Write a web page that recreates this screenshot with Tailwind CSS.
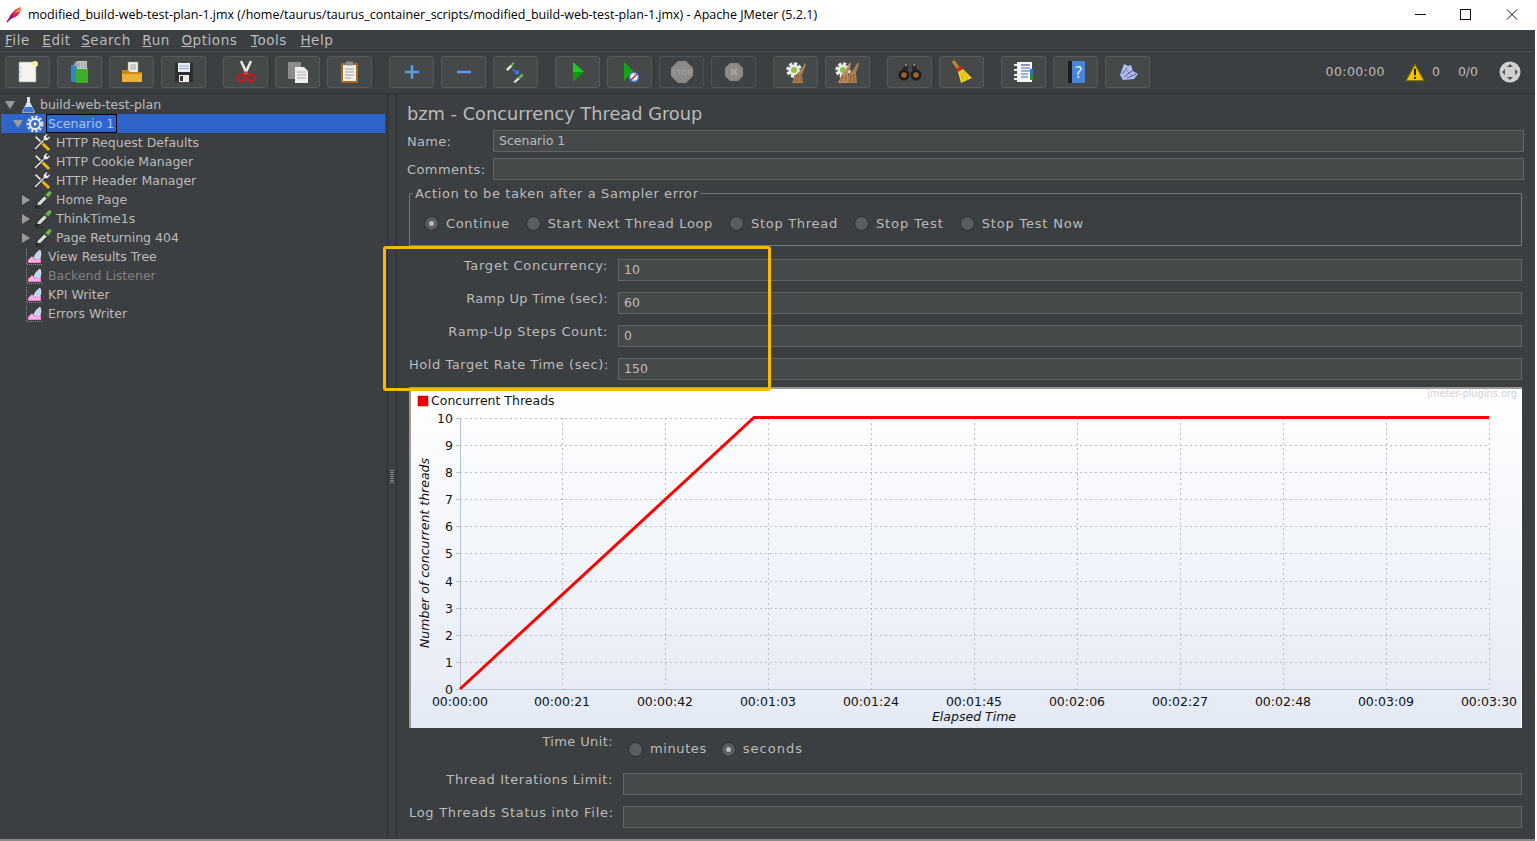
<!DOCTYPE html>
<html><head><meta charset="utf-8"><script src="https://cdn.jsdelivr.net/npm/@tailwindcss/browser@4"></script></head>
<body class="m-0 overflow-hidden bg-white">
<svg width="0" height="0" class="absolute">
<defs>
<linearGradient id="chartbg" x1="0" y1="0" x2="0" y2="1"><stop offset="0" stop-color="#ffffff"/><stop offset="1" stop-color="#e4eaf5"/></linearGradient>
<symbol id="wrench" viewBox="0 0 20 20"><path d="M3 3 L17 17" stroke="#e4e4e4" stroke-width="1.8"/><path d="M1 1 L4 4" stroke="#333" stroke-width="1.6"/><path d="M10.5 10.5 L18 18" stroke="#f2b705" stroke-width="3"/><path d="M2 18 L13 7" stroke="#1e1e1e" stroke-width="3"/><path d="M3 17 L13 7" stroke="#dcdcdc" stroke-width="1.6"/><path d="M12 8 L12 4 L15 1 L17 1 L15 4 L16 5 L19 3 L19 5 L16 8 Z" fill="#ececec" stroke="#222" stroke-width=".5"/></symbol>
<symbol id="pipette" viewBox="0 0 20 20"><path d="M1 19 H10" stroke="#2a2a2a" stroke-width="1.2"/><path d="M2 17 L4 13 L11 6 L14 9 L7 16 Z" fill="#d9dcd6" stroke="#1e1e1e" stroke-width="1"/><path d="M1.5 18.5 L4 16" stroke="#1e1e1e" stroke-width="1.4"/><path d="M12 5 L15.5 1.5 Q18.5 .5 18.5 3.5 L15 8 Z" fill="#6fb552"/><path d="M10.5 5 L15 9.5" stroke="#2d5c22" stroke-width="1.6"/></symbol>
<symbol id="listener" viewBox="0 0 18 16"><path d="M.5 0 V15.5 H17" fill="none" stroke="#8a8a8a" stroke-dasharray="1 1"/><path d="M2 14 V11 L6 7 L9 10 L15 9 V14 Z" fill="#f07fcf"/><path d="M3 13 V11 L6 8 L9 11 L14 10 V13 Z" fill="#f6b4e4"/><path d="M8 9 Q9 4 14 1 Q16 5 14 9 Q11 10 8 9 Z" fill="#bcd4f6" stroke="#f0f6ff" stroke-width=".7"/></symbol>
<symbol id="pipesmall" viewBox="0 0 24 24"><path d="M1 9 L6 4 L8 6 L3 11 Z" fill="#dfe3da"/><path d="M6 4 L9 1 Q11 1 10 3 L8 6 Z" fill="#6eb04e"/><path d="M8 9 L14 13" stroke="#2f80e0" stroke-width="1.6"/><path d="M15 9 L15 15 L10 14 Z" fill="#2f80e0"/><path d="M9 23 L14 18 L16 20 L11 24 Z" fill="#dfe3da"/><path d="M14 18 L18 14 Q20 14 20 16 L16 20 Z" fill="#6eb04e"/></symbol>
</defs>
</svg>

<div class="w-[1537px] h-[841px] flex flex-col font-['DejaVu_Sans',sans-serif] text-[12.5px] text-[#bbbbbb] bg-white">
  <!-- title bar -->
  <div class="h-[30px] shrink-0 flex items-center bg-white text-black font-['Open_Sans',sans-serif] text-[12.5px] relative">
    <svg class="ml-[6px] mr-[5px] shrink-0 mb-[2px]" width="17" height="17" viewBox="0 0 17 17"><path d="M2 15 C3 9 7 4 15 1 C15 6 12 11 5 13 Z" fill="#d8265c"/><path d="M8 7 C10 5 12 3 15 1 C15 3 14 5 13 6 Z" fill="#f59a23"/><path d="M1 16 L7 9" stroke="#6a1b8a" stroke-width="1.4"/></svg>
    <span class="whitespace-nowrap">modified_build-web-test-plan-1.jmx (/home/taurus/taurus_container_scripts/modified_build-web-test-plan-1.jmx) - Apache JMeter (5.2.1)</span>
    <div class="ml-auto flex items-center mr-[2px]">
      <svg class="w-[46px] h-[30px]" viewBox="0 0 46 30"><path d="M18 14.5 H29" stroke="#111"/></svg>
      <svg class="w-[46px] h-[30px]" viewBox="0 0 46 30"><rect x="17.5" y="9.5" width="10" height="10" fill="none" stroke="#111"/></svg>
      <svg class="w-[46px] h-[30px]" viewBox="0 0 46 30"><path d="M18 9.5 L28 19.5 M28 9.5 L18 19.5" stroke="#111"/></svg>
    </div>
  </div>
  <!-- app frame -->
  <div class="flex-1 flex flex-col bg-[#3c3f41] mr-[2px] border-b-[2px] border-[#8a8a8a] min-h-0">
    <!-- menu -->
    <div class="h-[20px] shrink-0 flex items-center pl-[5px] gap-[12.5px] text-[13.5px] leading-[20px] tracking-[.55px]">
      <span><u>F</u>ile</span><span><u>E</u>dit</span><span class="-ml-[2px]"><u>S</u>earch</span><span class="-ml-[1px]"><u>R</u>un</span><span class="-ml-[1px]"><u>O</u>ptions</span><span class="ml-[1px]"><u>T</u>ools</span><span class="ml-[1px]"><u>H</u>elp</span>
    </div>
    <!-- toolbar -->
    <div class="h-[44px] shrink-0 border-y border-[#2f3133] flex items-center pl-[5px] relative shadow-[inset_0_1px_0_#555]">
      <div class="flex gap-[7px]">
        <button class="w-[45px] h-[32px] rounded-[3px] border border-[#55595b] bg-[#45494a] flex items-center justify-center"><svg width="22" height="24" viewBox="0 0 22 24"><rect x="2" y="2" width="17" height="20" fill="#f4f4f0" stroke="#999" stroke-width=".6"/><circle cx="18" cy="4" r="3" fill="#f8f0a0"/><circle cx="4" cy="8" r=".7" fill="#999"/><circle cx="4" cy="12" r=".7" fill="#999"/><circle cx="4" cy="16" r=".7" fill="#999"/></svg></button>
        <button class="w-[45px] h-[32px] rounded-[3px] border border-[#55595b] bg-[#45494a] flex items-center justify-center"><svg width="22" height="24" viewBox="0 0 22 24"><rect x="2" y="5" width="7" height="17" rx="1" fill="#2f86c8"/><rect x="7" y="8" width="12" height="15" rx="1" fill="#3fae2a"/><rect x="8" y="1" width="10" height="8" fill="#c5c9cc"/><path d="M4 6 L7 1 L10 6 Z" fill="#9aa3a8"/><path d="M10 2V8M13 2V8M16 2V8" stroke="#8a9094"/></svg></button>
        <button class="w-[45px] h-[32px] rounded-[3px] border border-[#55595b] bg-[#45494a] flex items-center justify-center"><svg width="22" height="24" viewBox="0 0 22 24"><rect x="7" y="2" width="10" height="11" fill="#eee" stroke="#999" stroke-width=".5"/><path d="M9 5H15M9 7H15M9 9H15" stroke="#888" stroke-width=".7"/><path d="M1 10 H7 L9 12 H21 V22 H1 Z" fill="#c98a18"/><path d="M1 14 H21 V22 H1 Z" fill="#eab238"/></svg></button>
        <button class="w-[45px] h-[32px] rounded-[3px] border border-[#55595b] bg-[#45494a] flex items-center justify-center"><svg width="22" height="24" viewBox="0 0 22 24"><path d="M2 3 H20 V22 H2 Z" fill="#2e2e2e"/><rect x="5" y="3" width="12" height="9" fill="#e8eef4"/><path d="M6 6H16M6 8.5H16" stroke="#8fa8c8"/><rect x="6" y="15" width="10" height="7" fill="#eee"/><rect x="7" y="16" width="3" height="5" fill="#333"/></svg></button>
      </div>
      <div class="flex gap-[7px] ml-[17px]">
        <button class="w-[45px] h-[32px] rounded-[3px] border border-[#55595b] bg-[#45494a] flex items-center justify-center"><svg width="22" height="24" viewBox="0 0 22 24"><path d="M6 1 L12 14 M16 1 L10 14" stroke="#e8e8e8" stroke-width="2.6"/><circle cx="6" cy="18" r="3.6" fill="none" stroke="#d01818" stroke-width="2"/><circle cx="16" cy="18" r="3.6" fill="none" stroke="#d01818" stroke-width="2"/><path d="M8 15 L11 12 L14 15" fill="none" stroke="#d01818" stroke-width="1.5"/></svg></button>
        <button class="w-[45px] h-[32px] rounded-[3px] border border-[#55595b] bg-[#45494a] flex items-center justify-center"><svg width="22" height="24" viewBox="0 0 22 24"><rect x="1" y="2" width="13" height="17" fill="#8a8c8e"/><path d="M8 7 H17 L21 11 V23 H8 Z" fill="#eeeeee"/><path d="M10 12H19M10 15H19M10 18H19" stroke="#999" stroke-width=".8"/></svg></button>
        <button class="w-[45px] h-[32px] rounded-[3px] border border-[#55595b] bg-[#45494a] flex items-center justify-center"><svg width="22" height="24" viewBox="0 0 22 24"><rect x="2" y="3" width="17" height="20" rx="1" fill="#a86a18"/><rect x="4" y="5" width="13" height="16" fill="#f0f0f0"/><rect x="7" y="1.5" width="7" height="4" fill="#8a8c8e"/><path d="M6 9H15M6 12H15M6 15H15M6 18H12" stroke="#888" stroke-width=".8"/></svg></button>
      </div>
      <div class="flex gap-[7px] ml-[17px]">
        <button class="w-[45px] h-[32px] rounded-[3px] border border-[#55595b] bg-[#45494a] flex items-center justify-center"><svg width="18" height="18" viewBox="0 0 18 18"><path d="M9 2V16M2 9H16" stroke="#5a9ae6" stroke-width="2.6"/></svg></button>
        <button class="w-[45px] h-[32px] rounded-[3px] border border-[#55595b] bg-[#45494a] flex items-center justify-center"><svg width="18" height="18" viewBox="0 0 18 18"><path d="M2 9H16" stroke="#5a9ae6" stroke-width="2.6"/></svg></button>
        <button class="w-[45px] h-[32px] rounded-[3px] border border-[#55595b] bg-[#45494a] flex items-center justify-center"><svg width="22" height="22"><use href="#pipesmall"/></svg></button>
      </div>
      <div class="flex gap-[7px] ml-[17px]">
        <button class="w-[45px] h-[32px] rounded-[3px] border border-[#55595b] bg-[#45494a] flex items-center justify-center"><svg width="22" height="24" viewBox="0 0 22 24"><path d="M6 2 L17 12 L6 22 Z" fill="#0f9a0f"/><path d="M6 2 L17 12 L6 12 Z" fill="#22c822"/></svg></button>
        <button class="w-[45px] h-[32px] rounded-[3px] border border-[#55595b] bg-[#45494a] flex items-center justify-center"><svg width="22" height="24" viewBox="0 0 22 24"><path d="M5 2 L14 11 L5 21 Z" fill="#12a812"/><circle cx="15" cy="17" r="4.5" fill="#e8eef8" stroke="#3f7fd8" stroke-width="1.4"/><path d="M12 20 L18 14" stroke="#d82020" stroke-width="1.4"/></svg></button>
        <button class="w-[45px] h-[32px] rounded-[3px] border border-[#4e5254] bg-[#3f4244] flex items-center justify-center"><svg width="24" height="24" viewBox="0 0 24 24"><path d="M8 1 H16 L23 8 V16 L16 23 H8 L1 16 V8 Z" fill="#8a8a8a"/><text x="12" y="15" text-anchor="middle" font-family="DejaVu Sans" font-weight="bold" font-size="7.5" fill="#9c9c9c">STOP</text></svg></button>
        <button class="w-[45px] h-[32px] rounded-[3px] border border-[#4e5254] bg-[#3f4244] flex items-center justify-center"><svg width="20" height="20" viewBox="0 0 20 20"><path d="M6 1 H14 L19 6 V14 L14 19 H6 L1 14 V6 Z" fill="#8a8a8a"/><path d="M7 7L13 13M13 7L7 13" stroke="#a8a8a8" stroke-width="2"/></svg></button>
      </div>
      <div class="flex gap-[7px] ml-[17px]">
        <button class="w-[45px] h-[32px] rounded-[3px] border border-[#55595b] bg-[#45494a] flex items-center justify-center"><svg width="24" height="24" viewBox="0 0 24 24"><circle cx="10" cy="10" r="6" fill="none" stroke="#ececec" stroke-width="3.4" stroke-dasharray="3 1.6"/><circle cx="10" cy="10" r="5.5" fill="#ececec"/><circle cx="10" cy="10" r="3" fill="#8cc63f"/><path d="M8 23 L11 15 L15 12 L21 3 L22 5 L18 14 L19 23 Z" fill="#ab7d50"/><path d="M11 22 L13 15M14 22 L15 15M17 22 L17 14" stroke="#7a5630" stroke-width=".8"/></svg></button>
        <button class="w-[45px] h-[32px] rounded-[3px] border border-[#55595b] bg-[#45494a] flex items-center justify-center"><svg width="26" height="24" viewBox="0 0 26 24"><circle cx="8" cy="10" r="6" fill="none" stroke="#ececec" stroke-width="3.4" stroke-dasharray="3 1.6"/><circle cx="8" cy="10" r="5.5" fill="#ececec"/><circle cx="8" cy="10" r="3" fill="#8cc63f"/><path d="M3 23 L7 14 L10 11 L15 2 L16 4 L13 13 L14 23 Z" fill="#bb8d60"/><path d="M12 23 L14 14 L18 10 L23 2 L24 4 L21 13 L22 23 Z" fill="#ab7d50"/><path d="M6 22 L8 15M10 22 L11 15M15 22 L16 15M19 22 L19 14" stroke="#7a5630" stroke-width=".8"/></svg></button>
      </div>
      <div class="flex gap-[7px] ml-[17px]">
        <button class="w-[45px] h-[32px] rounded-[3px] border border-[#55595b] bg-[#45494a] flex items-center justify-center"><svg width="24" height="18" viewBox="0 0 24 18"><path d="M4 7 L7 1 H10 V7 H14 V1 H17 L20 7 Z" fill="#2a2a2a"/><circle cx="6" cy="12" r="5.5" fill="#1c1c1c"/><circle cx="18" cy="12" r="5.5" fill="#1c1c1c"/><circle cx="6" cy="12" r="2.8" fill="#a5602a"/><circle cx="18" cy="12" r="2.8" fill="#a5602a"/><path d="M7 2H9M15 2H17" stroke="#ddd"/></svg></button>
        <button class="w-[45px] h-[32px] rounded-[3px] border border-[#55595b] bg-[#45494a] flex items-center justify-center"><svg width="22" height="24" viewBox="0 0 22 24"><path d="M2 1 L8 9" stroke="#c08a2a" stroke-width="3"/><path d="M5 9 L10 6 L12 9 L7 12 Z" fill="#d82020"/><path d="M7 12 L12 9 L21 18 L10 23 Z" fill="#f2d020"/><path d="M10 13 L13 22M12 11 L17 20" stroke="#c8a010" stroke-width=".8"/></svg></button>
      </div>
      <div class="flex gap-[7px] ml-[17px]">
        <button class="w-[45px] h-[32px] rounded-[3px] border border-[#55595b] bg-[#45494a] flex items-center justify-center"><svg width="22" height="24" viewBox="0 0 22 24"><rect x="4" y="2" width="15" height="20" fill="#f8f8f8"/><path d="M1 5H6M1 10H6M1 15H6M1 19H6" stroke="#eee" stroke-width="1.8"/><path d="M8 5H17" stroke="#333"/><path d="M8 8H17M8 11H17M8 14H15M8 17H15" stroke="#2f6fd0"/><rect x="17" y="9" width="3" height="5" fill="#2f6fd0"/><rect x="17" y="14" width="3" height="6" fill="#2e8a3a"/></svg></button>
        <button class="w-[45px] h-[32px] rounded-[3px] border border-[#55595b] bg-[#45494a] flex items-center justify-center"><svg width="22" height="24" viewBox="0 0 22 24"><rect x="3" y="1" width="17" height="22" fill="#4a86d8"/><rect x="3" y="1" width="4" height="22" fill="#1c1c1c"/><text x="13.5" y="18" text-anchor="middle" font-family="DejaVu Sans" font-size="16" fill="#dfe9f8">?</text></svg></button>
        <button class="w-[45px] h-[32px] rounded-[3px] border border-[#55595b] bg-[#45494a] flex items-center justify-center"><svg width="22" height="22" viewBox="0 0 22 22"><path d="M3 14 L7 3 L11 5 L14 4 L16 10 L21 13 L17 18 L6 19 Z" fill="#aebfe8"/><path d="M5 13 L10 7M7 16 L16 9M10 17 L19 13" stroke="#3a5ad0" stroke-width="1"/><path d="M8 8 L14 14" stroke="#e06a6a"/></svg></button>
      </div>
      <div class="ml-auto flex items-center text-[12.5px] pr-[14px]">
        <span class="mr-[20px] tracking-[.4px]">00:00:00</span>
        <svg width="20" height="19" viewBox="0 0 22 20"><path d="M11 1 L21 19 H1 Z" fill="#f2c500" stroke="#7a6400" stroke-width="1.2"/><path d="M11 6V13M11 15V17" stroke="#111" stroke-width="2"/></svg>
        <span class="ml-[7px] mr-[18px]">0</span>
        <span class="mr-[21px]">0/0</span>
        <svg width="22" height="22" viewBox="0 0 22 22"><circle cx="11" cy="11" r="10.5" fill="#cfcfcf"/><path d="M11 3 L14 6 H8 Z M11 19 L14 16 H8 Z M3 11 L6 8 V14 Z M19 11 L16 8 V14 Z" fill="#555"/></svg>
      </div>
    </div>
    <!-- main -->
    <div class="flex-1 flex min-h-0">
      <!-- tree -->
      <div class="w-[388px] shrink-0 border-r border-[#2b2d2e] pt-px flex flex-col leading-[19px] pl-px pr-[2px]">
        <div class="h-[19px] flex items-center"><span class="w-0 h-0 ml-[4px] mr-[6px] border-x-[5px] border-x-transparent border-t-[8px] border-t-[#999]"></span><svg class="mr-[4px]" width="15" height="18" viewBox="0 0 15 18"><path d="M6 1 H9 V6 L14 16 Q14 17 13 17 H2 Q1 17 1 16 L6 6 Z" fill="#d8e0f0"/><path d="M4 11 H11 L13.5 16.5 H1.5 Z" fill="#3a78d8"/></svg><span class="whitespace-nowrap">build-web-test-plan</span></div>
        <div class="h-[19px] flex items-center bg-[#2f65ca]"><span class="w-0 h-0 ml-[12px] mr-[3px] border-x-[5px] border-x-transparent border-t-[8px] border-t-[#999]"></span><svg class="mr-[2px]" width="18" height="18" viewBox="0 0 18 18"><circle cx="9" cy="9" r="6.8" fill="none" stroke="#d8d8d8" stroke-width="3.4" stroke-dasharray="2.4 1.6"/><circle cx="9" cy="9" r="6" fill="#e4e9f2"/><circle cx="9" cy="9" r="4" fill="#3a70c8"/><path d="M8 7 L11 9 L8 11Z" fill="#fff"/></svg><span class="border border-black h-[19px] px-px leading-[17px] text-[#a8c4f0] whitespace-nowrap w-[71px]">Scenario 1</span></div>
        <div class="h-[19px] flex items-center pl-[31px]"><svg class="mr-[5px]" width="19" height="19"><use href="#wrench"/></svg><span>HTTP Request Defaults</span></div>
        <div class="h-[19px] flex items-center pl-[31px]"><svg class="mr-[5px]" width="19" height="19"><use href="#wrench"/></svg><span>HTTP Cookie Manager</span></div>
        <div class="h-[19px] flex items-center pl-[31px]"><svg class="mr-[5px]" width="19" height="19"><use href="#wrench"/></svg><span>HTTP Header Manager</span></div>
        <div class="h-[19px] flex items-center pl-[21px]"><span class="w-0 h-0 mr-[4px] border-y-[5px] border-y-transparent border-l-[8px] border-l-[#999]"></span><svg class="mr-[3px]" width="19" height="19"><use href="#pipette"/></svg><span>Home Page</span></div>
        <div class="h-[19px] flex items-center pl-[21px]"><span class="w-0 h-0 mr-[4px] border-y-[5px] border-y-transparent border-l-[8px] border-l-[#999]"></span><svg class="mr-[3px]" width="19" height="19"><use href="#pipette"/></svg><span>ThinkTime1s</span></div>
        <div class="h-[19px] flex items-center pl-[21px]"><span class="w-0 h-0 mr-[4px] border-y-[5px] border-y-transparent border-l-[8px] border-l-[#999]"></span><svg class="mr-[3px]" width="19" height="19"><use href="#pipette"/></svg><span>Page Returning 404</span></div>
        <div class="h-[19px] flex items-center pl-[25px]"><svg class="mr-[4px]" width="18" height="16"><use href="#listener"/></svg><span>View Results Tree</span></div>
        <div class="h-[19px] flex items-center pl-[25px]"><svg class="mr-[4px]" width="18" height="16"><use href="#listener"/></svg><span class="text-[#808080]">Backend Listener</span></div>
        <div class="h-[19px] flex items-center pl-[25px]"><svg class="mr-[4px]" width="18" height="16"><use href="#listener"/></svg><span>KPI Writer</span></div>
        <div class="h-[19px] flex items-center pl-[25px]"><svg class="mr-[4px]" width="18" height="16"><use href="#listener"/></svg><span>Errors Writer</span></div>
      </div>
      <!-- splitter -->
      <div class="w-[9px] shrink-0 border-r border-[#2b2d2e] flex items-center justify-center pt-[18px]">
        <div class="w-[4px] h-[14px] bg-[repeating-linear-gradient(0deg,#888_0,#888_1px,transparent_1px,transparent_2px)]"></div>
      </div>
      <!-- right -->
      <div class="flex-1 min-w-0 pl-[10px] pr-[13px] relative flex flex-col text-[13px]">
        <div class="h-[36px] flex items-center text-[17.8px] leading-none pt-[4px] shrink-0">bzm - Concurrency Thread Group</div>
        <div class="h-[22px] flex items-center shrink-0">
          <span class="w-[86px] tracking-[.3px] pt-px">Name:</span>
          <div class="flex-1 h-[22px] bg-[#45494a] border border-[#646464] px-[5px] leading-[19px] text-[12.5px] mr-[-2px]">Scenario 1</div>
        </div>
        <div class="h-[22px] mt-[6px] flex items-center shrink-0">
          <span class="w-[86px] tracking-[.4px] pt-px">Comments:</span>
          <div class="flex-1 h-[22px] bg-[#45494a] border border-[#646464] mr-[-2px]"></div>
        </div>
        <!-- fieldset -->
        <div class="ml-[2px] mt-[13px] h-[53px] border border-[#7a7a7a] rounded-tl-[2px] relative flex items-center pl-[15px] gap-[17px] pt-[8px] shrink-0">
          <span class="absolute left-[3px] top-[-8px] bg-[#3c3f41] px-[2px] leading-[15px] tracking-[.6px]">Action to be taken after a Sampler error</span>
          <label class="flex items-center gap-[8px]"><span class="w-[13px] h-[13px] rounded-full bg-[#5a5d5f] shadow-[0_0_0_1px_#303234] flex items-center justify-center"><span class="w-[5px] h-[5px] rounded-full bg-[#bbbbbb]"></span></span><span class="tracking-[.65px]">Continue</span></label>
          <label class="flex items-center gap-[8px]"><span class="w-[13px] h-[13px] rounded-full bg-[#5a5d5f] shadow-[0_0_0_1px_#303234]"></span><span class="tracking-[.65px]">Start Next Thread Loop</span></label>
          <label class="flex items-center gap-[8px]"><span class="w-[13px] h-[13px] rounded-full bg-[#5a5d5f] shadow-[0_0_0_1px_#303234]"></span><span class="tracking-[.7px]">Stop Thread</span></label>
          <label class="flex items-center gap-[8px]"><span class="w-[13px] h-[13px] rounded-full bg-[#5a5d5f] shadow-[0_0_0_1px_#303234]"></span><span class="tracking-[.95px]">Stop Test</span></label>
          <label class="flex items-center gap-[8px]"><span class="w-[13px] h-[13px] rounded-full bg-[#5a5d5f] shadow-[0_0_0_1px_#303234]"></span><span class="tracking-[.8px]">Stop Test Now</span></label>
        </div>
        <!-- fields -->
        <div class="mt-[13px] flex flex-col gap-[11px] shrink-0 ml-[2px]">
          <div class="flex h-[22px] gap-[10px]"><span class="w-[199px] text-right tracking-[.77px] leading-[14px]">Target Concurrency:</span><div class="flex-1 bg-[#45494a] border border-[#646464] px-[5px] leading-[20px] text-[12.5px]">10</div></div>
          <div class="flex h-[22px] gap-[10px]"><span class="w-[199px] text-right tracking-[.3px] leading-[14px]">Ramp Up Time (sec):</span><div class="flex-1 bg-[#45494a] border border-[#646464] px-[5px] leading-[20px] text-[12.5px]">60</div></div>
          <div class="flex h-[22px] gap-[10px]"><span class="w-[199px] text-right tracking-[.6px] leading-[14px]">Ramp-Up Steps Count:</span><div class="flex-1 bg-[#45494a] border border-[#646464] px-[5px] leading-[20px] text-[12.5px]">0</div></div>
          <div class="flex h-[22px] gap-[10px]"><span class="w-[199px] text-right tracking-[.55px] leading-[14px] whitespace-nowrap">Hold Target Rate Time (sec):</span><div class="flex-1 bg-[#45494a] border border-[#646464] px-[5px] leading-[20px] text-[12.5px]">150</div></div>
        </div>
        <!-- highlight -->
        <div class="absolute z-10 left-[-14px] top-[152px] w-[388px] h-[145px] border-[3px] border-[#fdb900] rounded-[3px] pointer-events-none"></div>
        <!-- chart -->
        <div class="ml-[2px] mt-[7px] h-[341px] shrink-0 bg-white border-t-2 border-l-2 border-[#9a9a9a] relative">
          <svg class="absolute -left-[2px] -top-[1px]" width="1112" height="340" viewBox="409 388 1112 340" font-family="DejaVu Sans" font-size="12.5" fill="#111">
            <rect x="411" y="389" width="1110" height="339" fill="url(#chartbg)"/>
            <rect x="418" y="396" width="10" height="10" fill="#ee0000" stroke="#a00"  stroke-width=".5"/>
            <text x="431" y="405">Concurrent Threads</text>
            <text x="1517" y="397" text-anchor="end" font-size="9.8" fill="#cdd1d8">jmeter-plugins.org</text>
            <g stroke="#b9bec8" stroke-dasharray="2 3" fill="none">
              <path d="M562.5 418V689M665.5 418V689M768.5 418V689M871.5 418V689M974.5 418V689M1077.5 418V689M1180.5 418V689M1283.5 418V689M1386.5 418V689M1489.5 418V689"/>
              <path d="M460 418.5H1489M460 445.5H1489M460 472.5H1489M460 499.5H1489M460 526.5H1489M460 553.5H1489M460 581.5H1489M460 608.5H1489M460 635.5H1489M460 662.5H1489"/>
            </g>
            <path d="M460.5 418V689.5H1489" fill="none" stroke="#b9c2d0"/>
            <path d="M456 418.5H460M456 445.5H460M456 472.5H460M456 499.5H460M456 526.5H460M456 553.5H460M456 581.5H460M456 608.5H460M456 635.5H460M456 662.5H460M456 689.5H460" stroke="#b9c2d0"/>
            <path d="M460 689 L754 417.5 H1489" fill="none" stroke="#ff0000" stroke-width="3"/>
            <g text-anchor="end">
              <text x="453" y="423">10</text><text x="453" y="450">9</text><text x="453" y="477">8</text><text x="453" y="504">7</text><text x="453" y="531">6</text><text x="453" y="558">5</text><text x="453" y="586">4</text><text x="453" y="613">3</text><text x="453" y="640">2</text><text x="453" y="667">1</text><text x="453" y="694">0</text>
            </g>
            <g text-anchor="middle">
              <text x="460" y="706">00:00:00</text><text x="562" y="706">00:00:21</text><text x="665" y="706">00:00:42</text><text x="768" y="706">00:01:03</text><text x="871" y="706">00:01:24</text><text x="974" y="706">00:01:45</text><text x="1077" y="706">00:02:06</text><text x="1180" y="706">00:02:27</text><text x="1283" y="706">00:02:48</text><text x="1386" y="706">00:03:09</text><text x="1489" y="706">00:03:30</text>
            </g>
            <text x="974" y="721" text-anchor="middle" font-style="italic">Elapsed Time</text>
            <text transform="translate(429 553) rotate(-90)" text-anchor="middle" font-style="italic">Number of concurrent threads</text>
          </svg>
        </div>
        <!-- time unit -->
        <div class="flex h-[39px] shrink-0 ml-[2px] mt-[6px]">
          <span class="w-[204px] text-right tracking-[.4px] leading-[16px]">Time Unit:</span>
          <label class="flex items-center gap-[8px] ml-[16px] mb-[9px]"><span class="w-[13px] h-[13px] rounded-full bg-[#5a5d5f] shadow-[0_0_0_1px_#303234]"></span><span class="tracking-[.6px]">minutes</span></label>
          <label class="flex items-center gap-[8px] ml-[15px] mb-[9px]"><span class="w-[13px] h-[13px] rounded-full bg-[#5a5d5f] shadow-[0_0_0_1px_#303234] flex items-center justify-center"><span class="w-[5px] h-[5px] rounded-full bg-[#bbbbbb]"></span></span><span class="tracking-[1px]">seconds</span></label>
        </div>
        <div class="flex h-[22px] gap-[10px] ml-[2px] shrink-0"><span class="w-[204px] text-right tracking-[.6px] leading-[14px]">Thread Iterations Limit:</span><div class="flex-1 bg-[#45494a] border border-[#646464]"></div></div>
        <div class="flex h-[22px] gap-[10px] ml-[2px] mt-[11px] shrink-0"><span class="w-[204px] text-right tracking-[.7px] leading-[14px] whitespace-nowrap">Log Threads Status into File:</span><div class="flex-1 bg-[#45494a] border border-[#646464]"></div></div>
      </div>
    </div>
  </div>
</div>
</body></html>
